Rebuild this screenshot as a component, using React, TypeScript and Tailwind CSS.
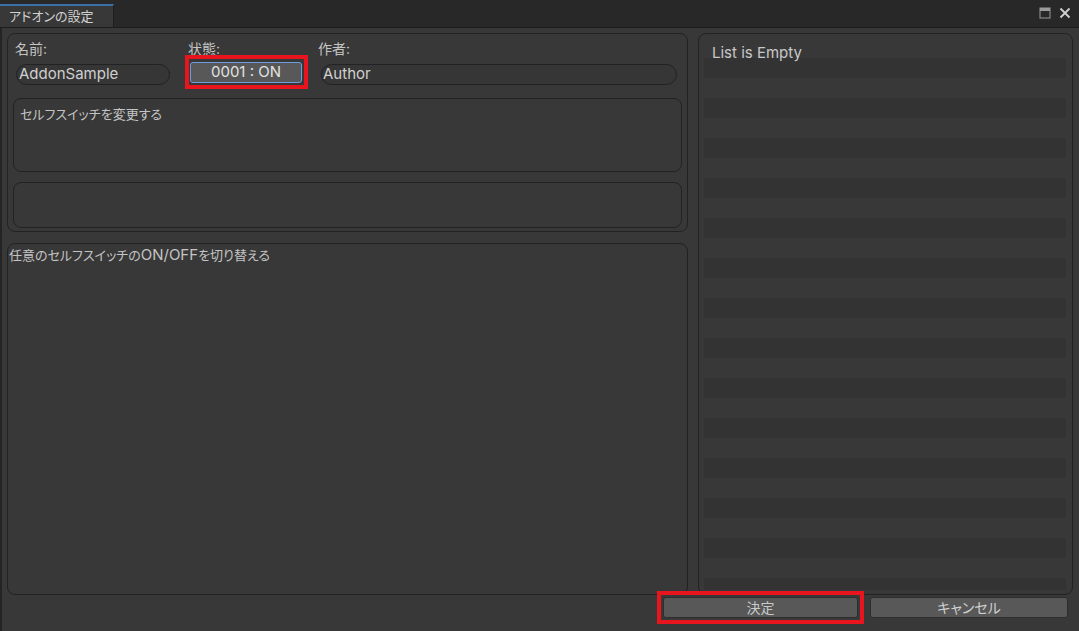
import React from "react";

const FONT = {
  fontFamily: 'Inter, "Noto Sans CJK JP", "Noto Sans", sans-serif',
  fontFeatureSettings: '"palt"',
};

function Stripes() {
  const rows = Array.from({ length: 28 }, (_, i) => i);
  return (
    <div className="relative flex min-h-0 flex-1 flex-col overflow-hidden">
      {rows.map((i) => (
        <div
          key={i}
          className={
            i % 2 === 1 ? "h-[20px] shrink-0 bg-[#333333]" : "h-[20px] shrink-0"
          }
        />
      ))}
      <div className="absolute left-[8px] top-[6px] text-[15px] leading-[18px] text-[#c8c8c8]">
        List is Empty
      </div>
    </div>
  );
}

export default function App() {
  return (
    <div
      className="flex h-[631px] w-[1079px] flex-col overflow-hidden bg-[#383838] text-[#c4c4c4]"
      style={FONT}
    >
      {/* Top bar */}
      <div className="flex h-[28px] shrink-0 items-end border-b border-[#1c1c1c] bg-[#282828]">
        <div className="flex h-[23px] w-[114px] items-center border-r border-[#1e1e1e] border-t-2 border-t-[#3a6fa8] bg-[#383838] pl-[9px] text-[13px] text-[#d2d2d2]">
          アドオンの設定
        </div>
        <div className="flex-1" />
        <div className="flex h-full items-center gap-[8px] pr-[8px] pb-[1px]">
          <svg width="12" height="12" viewBox="0 0 12 12">
            <rect x="1" y="1" width="10" height="10" fill="none" stroke="#9a9a9a" strokeWidth="1" />
            <rect x="1" y="1" width="10" height="3" fill="#9a9a9a" />
          </svg>
          <svg width="12" height="12" viewBox="0 0 12 12">
            <path d="M1.5 1.5 L10.5 10.5 M10.5 1.5 L1.5 10.5" stroke="#d0d0d0" strokeWidth="1.8" />
          </svg>
        </div>
      </div>

      {/* Body */}
      <div className="flex min-h-0 flex-1 flex-col border-l-2 border-[#242424] pl-[5px] pr-[6px] pt-[5px]">
        <div className="flex min-h-0 flex-1 gap-[10px]">
          {/* Left column */}
          <div className="flex w-[681px] flex-col gap-[11px]">
            {/* Top panel */}
            <div className="flex h-[199px] flex-col rounded-[8px] border border-[#222222] px-[5px] pt-[7px]">
              <div className="flex pl-[2px] text-[14px]">
                <div className="flex w-[157px] flex-col">
                  <div className="leading-[16px]">名前:</div>
                  <div className="ml-px mt-[7px] flex h-[21px] w-[154px] items-center rounded-full border border-[#222222] bg-[#363636] pl-[2px] text-[15px] text-[#d0d0d0]">
                    AddonSample
                  </div>
                </div>
                <div className="ml-[16px] flex w-[115px] flex-col">
                  <div className="leading-[16px]">状態:</div>
                  <div className="relative ml-[2px] mt-[5px] w-[112px]">
                    <div className="flex h-[21px] items-center justify-center rounded-[3px] border border-[#6d9de0] bg-[#585858] text-[15px] text-[#e2e2e2]">
                      0001 : ON
                    </div>
                    <span className="absolute -bottom-[6px] -left-[5px] -right-[6px] -top-[7px] border-4 border-[#e8141e]" />
                  </div>
                </div>
                <div className="ml-[15px] flex flex-col">
                  <div className="leading-[16px]">作者:</div>
                  <div className="ml-[3px] mt-[7px] flex h-[21px] w-[356px] items-center rounded-full border border-[#222222] bg-[#363636] pl-[1px] text-[15px] text-[#d0d0d0]">
                    Author
                  </div>
                </div>
              </div>
              <div className="mt-[13px] h-[74px] rounded-[8px] border border-[#222222] pl-[6px] pt-[6px] text-[13px] leading-[18px]">
                セルフスイッチを変更する
              </div>
              <div className="mt-[10px] h-[46px] rounded-[8px] border border-[#222222]" />
            </div>
            {/* Bottom panel */}
            <div className="min-h-0 flex-1 rounded-[8px] border border-[#222222] pl-[1px] pt-[2px] text-[13px] leading-[18px]">
              任意のセルフスイッチの<span className="text-[15px]">ON/OFF</span>を切り替える
            </div>
          </div>

          {/* Right panel */}
          <div className="flex min-h-0 flex-1 flex-col rounded-[8px] border border-[#222222] pb-[4px] pl-[5px] pr-[6px] pt-[4px]">
            <Stripes />
          </div>
        </div>

        {/* Buttons */}
        <div className="mb-[13px] mt-[2px] flex h-[21px] shrink-0 justify-end gap-[12px] pr-[5px]">
          <div className="relative w-[195px]">
            <div className="flex h-[21px] items-center justify-center rounded-[3px] border border-[#2e2e2e] bg-[#585858] text-[14px] text-[#c8c8c8]">
              決定
            </div>
            <span className="absolute -inset-[6px] border-4 border-[#e8141e]" />
          </div>
          <div className="flex h-[21px] w-[198px] items-center justify-center rounded-[3px] border border-[#2e2e2e] bg-[#585858] text-[14px] text-[#d0d0d0]">
            キャンセル
          </div>
        </div>
      </div>
    </div>
  );
}
